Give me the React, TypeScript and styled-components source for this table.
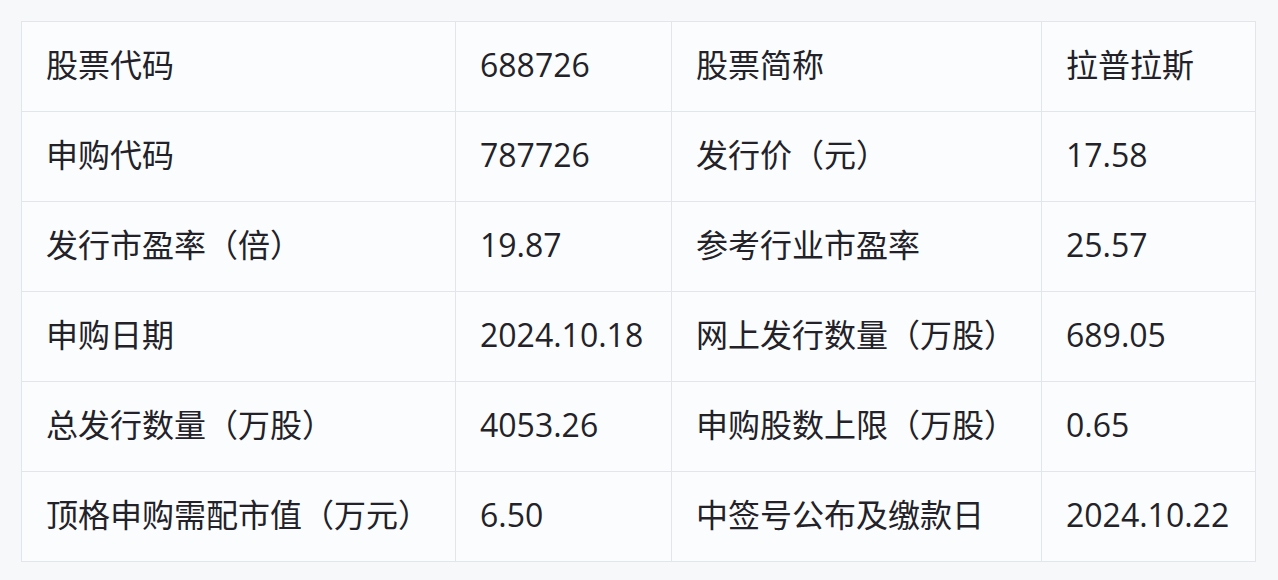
import React from "react";
import styled, { createGlobalStyle } from "styled-components";

const GlobalStyle = createGlobalStyle`
  html, body {
    margin: 0;
    padding: 0;
    background: #f7f8fa;
  }
  body {
    font-family: "Open Sans", "Noto Sans CJK SC", sans-serif;
  }
`;

const Page = styled.div`
  padding: 21px 0 19px 21px;
  background: #f7f8fa;
`;

const Grid = styled.div`
  display: grid;
  grid-template-columns: 434px 216px 370px 214px;
  grid-auto-rows: 90px;
  width: 1234px;
  border-left: 1px solid #e2e5ea;
  border-top: 1px solid #e2e5ea;
  background: #fbfcfe;
`;

const Cell = styled.div`
  display: flex;
  align-items: center;
  padding: 0 0 3px 24px;
  border-right: 1px solid #e2e5ea;
  border-bottom: 1px solid #e2e5ea;
  font-family: "Open Sans", "Noto Sans CJK SC", sans-serif;
  font-size: 32px;
  line-height: 1;
  color: #222228;
  white-space: nowrap;
  box-sizing: border-box;
`;

const rows: [string, string, string, string][] = [
  ["股票代码", "688726", "股票简称", "拉普拉斯"],
  ["申购代码", "787726", "发行价（元）", "17.58"],
  ["发行市盈率（倍）", "19.87", "参考行业市盈率", "25.57"],
  ["申购日期", "2024.10.18", "网上发行数量（万股）", "689.05"],
  ["总发行数量（万股）", "4053.26", "申购股数上限（万股）", "0.65"],
  ["顶格申购需配市值（万元）", "6.50", "中签号公布及缴款日", "2024.10.22"],
];

export default function App() {
  return (
    <>
      <GlobalStyle />
      <Page>
        <Grid>
          {rows.map((r, i) =>
            r.map((c, j) => <Cell key={`${i}-${j}`}>{c}</Cell>)
          )}
        </Grid>
      </Page>
    </>
  );
}
